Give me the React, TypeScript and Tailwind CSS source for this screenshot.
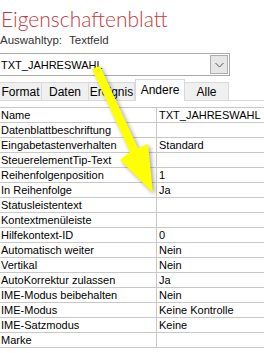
import React from "react";

const rows: [string, string][] = [
  ["Name", "TXT_JAHRESWAHL"],
  ["Datenblattbeschriftung", ""],
  ["Eingabetastenverhalten", "Standard"],
  ["SteuerelementTip-Text", ""],
  ["Reihenfolgenposition", "1"],
  ["In Reihenfolge", "Ja"],
  ["Statusleistentext", ""],
  ["Kontextmenüleiste", ""],
  ["Hilfekontext-ID", "0"],
  ["Automatisch weiter", "Nein"],
  ["Vertikal", "Nein"],
  ["AutoKorrektur zulassen", "Ja"],
  ["IME-Modus beibehalten", "Nein"],
  ["IME-Modus", "Keine Kontrolle"],
  ["IME-Satzmodus", "Keine"],
  ["Marke", ""],
];

const tabs = [
  { label: "Format", w: "w-[42px]" },
  { label: "Daten", w: "w-[47px]" },
  { label: "Ereignis", w: "w-[46px]" },
  { label: "Andere", w: "w-[50px]", active: true },
  { label: "Alle", w: "w-[44px]" },
];

export default function App() {
  return (
    <div
      className="relative w-[264px] h-[353px] bg-white overflow-hidden text-black"
      style={{ fontFamily: '"Liberation Sans", Arial, sans-serif' }}
    >
      <div
        className="h-[32px] pt-[7px] pl-[1px] text-[21px] leading-[24px] font-light text-[#c4393b] whitespace-nowrap"
        style={{ fontFamily: 'Lato, "Open Sans", sans-serif' }}
      >
        Eigenschaftenblatt
      </div>
      <div className="h-[21px] pt-[1px] text-[11.5px] leading-[14px] text-[#333] flex gap-[7px]">
        <span>Auswahltyp:</span>
        <span>Textfeld</span>
      </div>
      <div className="ml-[-1px] w-[231px] h-[23px] border border-[#ababab] flex items-center justify-between">
        <span className="pl-[1px] text-[11px] leading-[14px] text-black">TXT_JAHRESWAHL</span>
        <div className="w-[18px] h-[19px] mr-[1px] bg-[#e6e6e6] border border-[#adadad] flex items-center justify-center">
          <svg width="9" height="6" viewBox="0 0 9 6">
            <path d="M0.5 1 L4.5 5 L8.5 1" fill="none" stroke="#555" strokeWidth="1" />
          </svg>
        </div>
      </div>
      <div className="mt-[4px] h-[21px] flex items-end border-b border-[#d9d9d9]">
        {tabs.map((t) =>
          t.active ? (
            <div
              key={t.label}
              className={`${t.w} h-[22px] mb-[-1px] bg-white border border-b-0 border-[#d9d9d9] text-[12px] leading-[14px] text-black flex items-start justify-center pt-[3px]`}
            >
              {t.label}
            </div>
          ) : (
            <div
              key={t.label}
              className={`${t.w} h-[18px] bg-[#f0f0f0] border border-b-0 border-l-0 border-[#d9d9d9] text-[12px] leading-[14px] text-black flex items-center justify-center pt-[1px]`}
            >
              {t.label}
            </div>
          )
        )}
      </div>
      <div className="mt-[6px] border-t border-[#c8c8c8]">
        {rows.map(([k, v]) => (
          <div key={k} className="flex h-[15px] border-b border-[#c8c8c8] text-[11px] leading-[14px] text-black">
            <div className="w-[157px] pl-[1px] border-r border-[#c8c8c8] whitespace-nowrap overflow-hidden">{k}</div>
            <div className="flex-1 pl-[2px] whitespace-nowrap overflow-hidden">{v}</div>
          </div>
        ))}
      </div>
      <svg
        className="absolute left-0 top-0 pointer-events-none"
        width="264"
        height="353"
        viewBox="0 0 264 353"
        style={{ filter: "drop-shadow(2px 2px 2px rgba(0,0,0,0.35))" }}
      >
        <polygon
          points="92,69 100,66 138,148 148,144 153,193 120,160 130,152"
          fill="#ffff00"
        />
      </svg>
    </div>
  );
}
